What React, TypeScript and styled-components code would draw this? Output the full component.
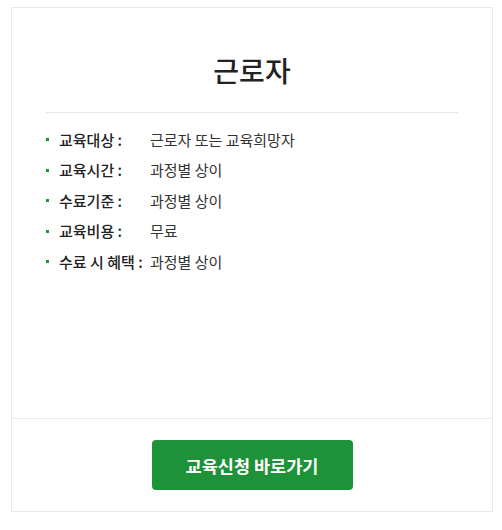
import React from "react";
import styled, { createGlobalStyle } from "styled-components";

const Global = createGlobalStyle`
  html, body { margin: 0; padding: 0; background: #fff; }
  body { font-family: "Noto Sans CJK KR", "Noto Sans", sans-serif; }
  * { box-sizing: border-box; }
`;

const Page = styled.div`
  padding: 7px 9px 0 11px;
`;

const Card = styled.div`
  width: 482px;
  height: 505px;
  border: 1px solid #e8e8e8;
  display: flex;
  flex-direction: column;
`;

const Body = styled.div`
  flex: 1;
  padding: 42px 34px 0;
`;

const Title = styled.h2`
  margin: 0;
  font-size: 28px;
  line-height: 40px;
  font-weight: 500;
  color: #222;
  text-align: center;
  padding-bottom: 22px;
  border-bottom: 1px solid #e8e8e8;
`;

const List = styled.ul`
  list-style: none;
  margin: 11px 0 0;
  padding: 0;
`;

const Item = styled.li`
  display: flex;
  align-items: center;
  height: 30.5px;
  font-size: 15px;
  padding-left: 13px;
  position: relative;
  &::before {
    content: "";
    position: absolute;
    left: 0;
    top: 50%;
    width: 3px;
    height: 3px;
    margin-top: -1px;
    background: #1e9238;
  }
`;

const Label = styled.span`
  width: 91px;
  flex: none;
  font-weight: 500;
  color: #222;
  white-space: nowrap;
`;

const Value = styled.span`
  color: #333;
`;

const Footer = styled.div`
  height: 93px;
  border-top: 1px solid #e8e8e8;
  display: flex;
  justify-content: center;
  align-items: center;
`;

const Button = styled.a`
  width: 201px;
  height: 50px;
  border-radius: 4px;
  background: #1e9238;
  color: #fff;
  font-size: 17.5px;
  font-weight: 700;
  display: flex;
  align-items: center;
  justify-content: center;
  text-decoration: none;
  cursor: pointer;
`;

const rows = [
  ["교육대상 :", "근로자 또는 교육희망자"],
  ["교육시간 :", "과정별 상이"],
  ["수료기준 :", "과정별 상이"],
  ["교육비용 :", "무료"],
  ["수료 시 혜택 :", "과정별 상이"],
];

export default function App() {
  return (
    <Page>
      <Global />
      <Card>
        <Body>
          <Title>근로자</Title>
          <List>
            {rows.map(([l, v]) => (
              <Item key={l}>
                <Label>{l}</Label>
                <Value>{v}</Value>
              </Item>
            ))}
          </List>
        </Body>
        <Footer>
          <Button>교육신청 바로가기</Button>
        </Footer>
      </Card>
    </Page>
  );
}
